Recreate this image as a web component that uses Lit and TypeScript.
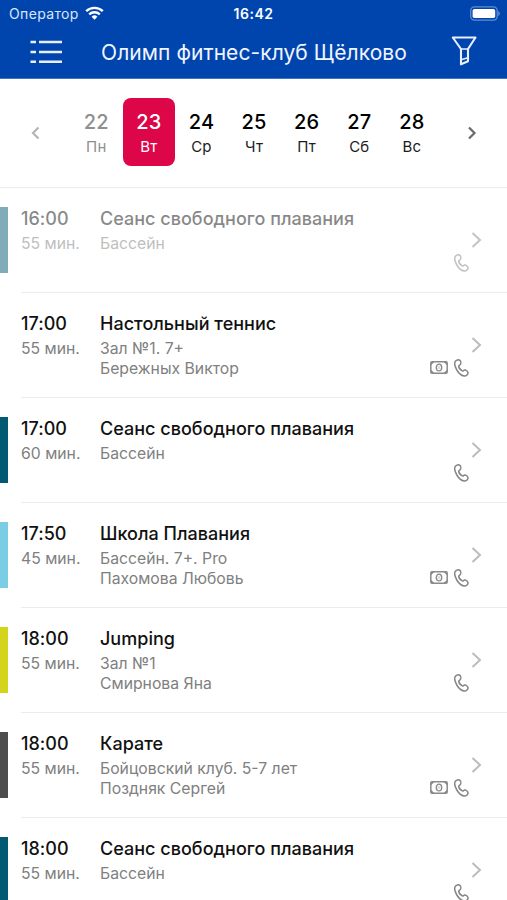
import { LitElement, html, css, svg, nothing } from "lit";
import { customElement, property, state } from "lit/decorators.js";
import { classMap } from "lit/directives/class-map.js";
import { styleMap } from "lit/directives/style-map.js";

interface Lesson {
  time: string;
  duration: string;
  title: string;
  place: string;
  coach?: string;
  color?: string;
  paid?: boolean;
  past?: boolean;
}

const DAYS = [
  { date: 22, name: "Пн", past: true },
  { date: 23, name: "Вт" },
  { date: 24, name: "Ср" },
  { date: 25, name: "Чт" },
  { date: 26, name: "Пт" },
  { date: 27, name: "Сб" },
  { date: 28, name: "Вс" },
];

const LESSONS: Lesson[] = [
  { time: "16:00", duration: "55 мин.", title: "Сеанс свободного плавания", place: "Бассейн", color: "#015a72", past: true },
  { time: "17:00", duration: "55 мин.", title: "Настольный теннис", place: "Зал №1. 7+", coach: "Бережных Виктор", paid: true },
  { time: "17:00", duration: "60 мин.", title: "Сеанс свободного плавания", place: "Бассейн", color: "#015a72" },
  { time: "17:50", duration: "45 мин.", title: "Школа Плавания", place: "Бассейн. 7+. Pro", coach: "Пахомова Любовь", color: "#7acde3", paid: true },
  { time: "18:00", duration: "55 мин.", title: "Jumping", place: "Зал №1", coach: "Смирнова Яна", color: "#d5d41d" },
  { time: "18:00", duration: "55 мин.", title: "Карате", place: "Бойцовский клуб. 5-7 лет", coach: "Поздняк Сергей", color: "#4d4d4d", paid: true },
  { time: "18:00", duration: "55 мин.", title: "Сеанс свободного плавания", place: "Бассейн", color: "#015a72" },
];

const chevron = (dir: "left" | "right") => svg`
  <path d=${dir === "left" ? "M8.500 1.500 3 7 8.500 12.500" : "M2 1.500 7.500 7 2 12.500"}
    fill="none" stroke="currentColor" stroke-width="2.200" />`;

@customElement("status-bar")
class StatusBar extends LitElement {
  static styles = css`
    :host { display: grid; grid-template-columns: 1fr auto 1fr; align-items: center; height: 27px; padding: 0 7px 0 9px; color: #fff; }
    .carrier { display: flex; align-items: center; gap: 6px; font-size: 14px; letter-spacing: 0.35px; color: #dbe6fa; }
    .clock { font-size: 14px; font-weight: 600; letter-spacing: 0.5px; margin-right: 2px; }
    .battery { justify-self: end; }
    svg { display: block; }
    .wifi { margin-bottom: 2px; }
  `;
  render() {
    return html`
      <div class="carrier">
        <span>Оператор</span>
        <svg class="wifi" width="19" height="14" viewBox="0 0 19 14" fill="none" stroke="#fff">
          <path d="M1.200 5.200a12 12 0 0 1 16.600 0" stroke-width="2.400" />
          <path d="M4.200 8.400a7.600 7.600 0 0 1 10.600 0" stroke-width="2.300" />
          <path d="M9.500 13.700 6.600 10.800a4.100 4.100 0 0 1 5.800 0z" fill="#fff" stroke="none" />
        </svg>
      </div>
      <div class="clock">16:42</div>
      <svg class="battery" width="30" height="15" viewBox="0 0 30 15">
        <rect x="0.700" y="0.900" width="26.500" height="13.200" rx="3.800" fill="none" stroke="#fff" stroke-opacity="0.38" stroke-width="1.300" />
        <rect x="2.600" y="2.900" width="22.600" height="9.200" rx="1.800" fill="#fff" />
        <path d="M28.300 5v5c1.900-.7 1.900-4.300 0-5z" fill="#fff" fill-opacity="0.450" />
      </svg>`;
  }
}

@customElement("club-header")
class ClubHeader extends LitElement {
  static styles = css`
    :host { display: grid; grid-template-columns: 33px 1fr 26px; align-items: center; height: 52px; padding: 0 30px; box-sizing: border-box; color: #fff; border-bottom: 1px solid #3b76cb; }
    h1 { margin: 1px 0 0; padding-right: 6px; justify-self: center; font-size: 21px; font-weight: 400; line-height: 28px; color: #f0f5ff; letter-spacing: 0.06px; white-space: nowrap; }
    svg { display: block; margin-bottom: 2px; }
    .filter { justify-self: end; margin-bottom: 3px; }
  `;
  render() {
    return html`
      <svg width="33" height="24" viewBox="0 0 33 24" stroke="#e9f0fd" stroke-width="2.600">
        <path d="M.5 2H6M9 2h23M.5 12H6M9 12h23M.5 21.700H6M9 21.700h23" />
      </svg>
      <h1>Олимп фитнес-клуб Щёлково</h1>
      <svg class="filter" width="26" height="30" viewBox="0 0 26 30" fill="none" stroke="#e9f0fd" stroke-width="2.100">
        <path d="M1.800 1.500h22.700L17 13v12.300l-7 3V13z" stroke-linejoin="round" />
        <path d="M10 13h7M10 23.800l7-2" stroke-width="1.600" />
      </svg>`;
  }
}

@customElement("week-picker")
class WeekPicker extends LitElement {
  @state() private selected = 23;
  static styles = css`
    :host { display: flex; align-items: flex-start; height: 109px; padding: 19px 30px 0 30px; box-sizing: border-box; border-bottom: 1px solid #ededed; }
    .arrow { display: flex; align-items: center; width: 10px; height: 68px; padding-top: 1px; box-sizing: border-box; color: #6a6a6a; }
    .arrow.prev { color: #b4b4b4; margin-right: 30px; }
    .arrow.next { margin-left: 29px; }
    .days { display: grid; grid-template-columns: repeat(7, 52.6px); }
    .day { display: flex; flex-direction: column; align-items: center; height: 68px; padding-top: 12px; box-sizing: border-box; border-radius: 8px; color: #1c1c1c; cursor: pointer; }
    .date { font-size: 20px; line-height: 25px; font-weight: 500; letter-spacing: 0.2px; color: #000; }
    .name { font-size: 15px; line-height: 24px; letter-spacing: 0.2px; }
    .past, .past .date { color: #8f8f8f; }
    .selected { background: #dc0648; color: #fff; }
    .selected .date { color: #fff; }
  `;
  render() {
    return html`
      <div class="arrow prev"><svg width="10" height="14">${chevron("left")}</svg></div>
      <div class="days">
        ${DAYS.map((d) => html`
          <div class=${classMap({ day: true, past: !!d.past, selected: d.date === this.selected })}
            @click=${() => (this.selected = d.date)}>
            <span class="date">${d.date}</span><span class="name">${d.name}</span>
          </div>`)}
      </div>
      <div class="arrow next"><svg width="10" height="14">${chevron("right")}</svg></div>`;
  }
}

@customElement("lesson-row")
class LessonRow extends LitElement {
  @property({ attribute: false }) lesson!: Lesson;
  static styles = css`
    :host { display: block; height: 105.05px; }
    .row { display: flex; height: 100%; }
    .past .stripe, .past .body > div { opacity: 0.5; }
    .past .go { color: #8a8a8a; }
    .stripe { width: 8px; height: 66px; margin: 19px 13px 0 0; flex: none; }
    .body { flex: 1; min-width: 0; display: grid; grid-template-columns: 79px 1fr 56px; padding-top: 19px; box-sizing: border-box; border-bottom: 1px solid #ececec; }
    .head { font-size: 18px; line-height: 24px; font-weight: 500; letter-spacing: 0.02px; color: #111; white-space: nowrap; }
    .sub { font-size: 15.75px; line-height: 19.7px; color: #808080; white-space: nowrap; }
    .head + .sub { margin-top: 3px; }
    .side { display: flex; flex-direction: column; align-items: flex-end; padding: 25px 25px 0 0; margin-left: -30px; }
    .marks { display: flex; align-items: center; gap: 6px; margin: 6px 13.5px 0 0; }
    svg { display: block; }
    .cash { margin-bottom: 1px; }
    .go { color: #bcbcbc; }
  `;
  render() {
    const l = this.lesson;
    return html`
      <div class=${classMap({ row: true, past: !!l.past })}>
        <div class="stripe" style=${styleMap({ background: l.color ?? "transparent" })}></div>
        <div class="body">
          <div>
            <div class="head">${l.time}</div>
            <div class="sub">${l.duration}</div>
          </div>
          <div>
            <div class="head">${l.title}</div>
            <div class="sub">${l.place}</div>
            ${l.coach ? html`<div class="sub">${l.coach}</div>` : nothing}
          </div>
          <div class="side">
            <svg class="go" width="11" height="16" viewBox="0 0 11 16"><path d="M1.500 1 9 8l-7.500 7" fill="none" stroke="currentColor" stroke-width="2" /></svg>
            <div class="marks">
              ${l.paid ? html`
                <svg class="cash" width="18" height="13" viewBox="0 0 18 13" fill="none" stroke="#8a8a8a">
                  <rect x="0.800" y="0.800" width="16.400" height="11.400" rx="1.200" stroke-width="1.500" />
                  <ellipse cx="9" cy="6.500" rx="2.700" ry="3.400" stroke-width="1.400" />
                  <path d="M9 5.200v2.600" stroke-width="0.600" />
                  <path d="M1 1h3.300L1 4.300zM17 1h-3.300L17 4.300zM1 12h3.300L1 8.700zM17 12h-3.300L17 8.700z" fill="#8a8a8a" stroke="none" />
                </svg>` : nothing}
              <svg width="15" height="18" viewBox="0 0 15 18" fill="none" stroke="#858585" stroke-width="1.500" stroke-linejoin="round">
                <path d="M1.200 2.500C2 .9 4.700.3 5.900 1.400 7.100 2.600 7 4.700 6.100 5.700 5.500 6.400 4.700 6.600 4.700 7.400 4.900 9 6.700 11.100 8.300 11.900 9.200 12.300 9.600 11.300 10.600 11.100 12 10.900 13.600 12.400 14 13.700 14.300 15.100 12.800 16.800 11 17 8 17.100 4.700 14.200 2.800 11 1.200 8.300.1 4.700 1.200 2.500Z" />
              </svg>
            </div>
          </div>
        </div>
      </div>`;
  }
}

@customElement("app-root")
class AppRoot extends LitElement {
  static styles = css`
    :host { display: flex; flex-direction: column; height: 900px; overflow: hidden; background: #fff; font-family: Inter, "Noto Sans", sans-serif; }
    .top { background: #0045ae; flex: none; }
    week-picker, lesson-row { flex: none; }
  `;
  render() {
    return html`
      <div class="top"><status-bar></status-bar><club-header></club-header></div>
      <week-picker></week-picker>
      ${LESSONS.map((l) => html`<lesson-row .lesson=${l}></lesson-row>`)}`;
  }
}
